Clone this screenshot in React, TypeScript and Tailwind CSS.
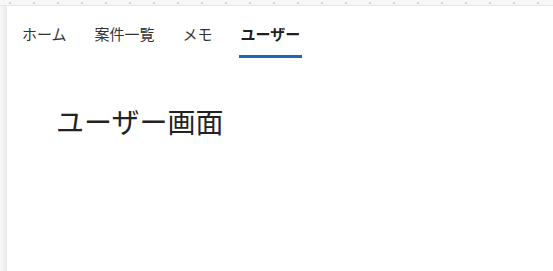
const tabs = ["ホーム", "案件一覧", "メモ", "ユーザー"];

export default function App() {
  const active = "ユーザー";
  return (
    <div
      className="flex h-[271px] w-[553px] flex-col overflow-hidden bg-[#f5f5f5]"
      style={{ fontFamily: '"Noto Sans CJK JP", "Noto Sans", sans-serif' }}
    >
      {/* ruler */}
      <div className="flex h-[6px] shrink-0 items-end gap-[22px] border-b border-[#e6e6e6] bg-[#f7f7f7] pl-[9px]">
        {Array.from({ length: 23 }).map((_, i) => (
          <span key={i} className="mb-[1px] h-[2px] w-[2px] bg-[#d6d6d6]" />
        ))}
      </div>
      <div className="flex flex-1">
        <div className="w-[7px] shrink-0 bg-gradient-to-r from-[#f9f9f9] to-[#e9e9e9]" />
        <div className="flex-1 bg-white">
          <nav className="flex gap-6 pl-[13px] pt-[16px]">
            {tabs.map((t) => (
              <div
                key={t}
                className={
                  "px-[2px] pb-[9px] text-[15px] leading-[24px] " +
                  (t === active
                    ? "border-b-[3px] border-[#1a6ab5] font-bold text-[#1f1f1f]"
                    : "border-b-[3px] border-transparent text-[#333333]")
                }
              >
                {t}
              </div>
            ))}
          </nav>
          <h1 className="pl-[49px] pt-[45px] text-[28px] leading-[36px] text-[#222222]">ユーザー画面</h1>
        </div>
      </div>
    </div>
  );
}
